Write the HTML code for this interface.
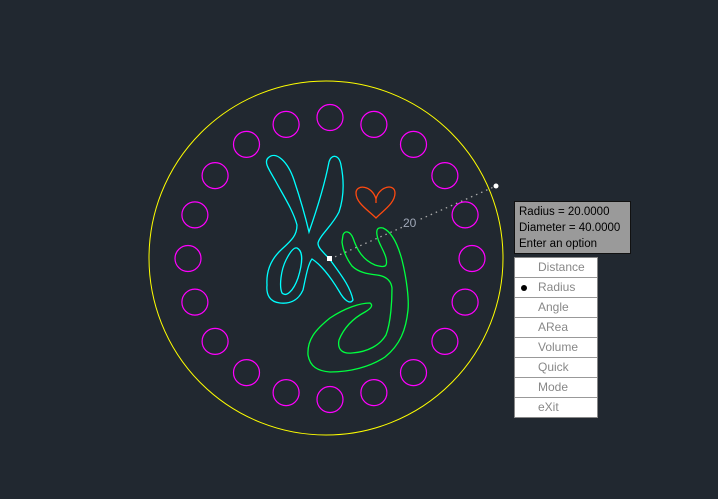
<!DOCTYPE html>
<html><head><meta charset="utf-8"><style>
body{margin:0;width:718px;height:499px;background:#212830;overflow:hidden;font-family:"Liberation Sans",Tahoma,sans-serif;position:relative}
.tip{position:absolute;left:514px;top:201px;background:#9a9a9a;border:1px solid #111;font-size:11.5px;line-height:16px;color:#000;padding:2px 0 0 4px;box-sizing:border-box;width:117px;height:53px}
.menu{position:absolute;left:514px;top:257px;width:84px;background:#fff;border:1px solid #888;box-sizing:border-box}
.menu div{height:19px;border-bottom:1px solid #999;font-size:12px;line-height:19px;color:#888;padding-left:23px;position:relative}
.menu div:last-child{border-bottom:none}
.dot{position:absolute;left:6px;top:7px;width:6px;height:6px;border-radius:50%;background:#000}
</style></head><body>
<svg width="718" height="499" style="position:absolute;left:0;top:0">
<circle cx="326" cy="258" r="177" fill="none" stroke="#ffff00" stroke-width="1"/>
<g fill="none" stroke="#ff00ff" stroke-width="1.2" id="sc"></g>
<path d="M268,158 C276,150 288,162 294,180 C300,198 305,215 309,232 C316,212 324,188 329,162 C331,154 339,154 341,165 C345,185 343,200 339,212 C332,226 320,235 318,243 C318,249 325,253 331,261 C341,275 350,286 353,300 C350,305 344,300 339,291 C330,276 320,264 312,259 C308,264 306,276 303,290 C298,301 290,304 280,303 C270,302 266,295 267,285 C266,270 272,258 282,249 C292,240 297,235 297,225 C293,210 283,195 275,180 C268,168 264,162 268,158 Z" fill="none" stroke="#00ffff" stroke-width="1.3"/>
<path d="M297,248 C303,251 303,262 298,278 C293,292 286,297 282,293 C279,286 281,270 286,260 C290,252 294,247 297,248 Z" fill="none" stroke="#00ffff" stroke-width="1.3"/>
<path d="M343,235 C345,230 350,231 353,238 C357,250 363,260 375,265 C385,268 388,267 386,258 C384,250 378,243 377,235 C376,229 378,227 383,228 C392,232 398,245 402,260 C407,280 409,300 408,310 C406,330 400,345 385,357 C370,367 350,372 330,372 C318,371 310,367 308,355 C307,340 315,330 330,318 C345,308 360,303 370,303 C373,305 372,308 365,312 C350,320 343,330 339,340 C337,350 343,354 352,353 C368,352 380,345 386,335 C391,322 392,300 392,288 C391,280 385,276 377,275 C367,274 358,272 352,266 C346,258 343,250 342,242 Z" fill="none" stroke="#00ff40" stroke-width="1.3"/>
<path d="M376,199 C379,186 395,183 395,193 C395,203 384,210 376,218 C368,210 356,203 356,193 C356,184 372,185 376,199 Z M376,199 L376,203" fill="none" stroke="#ff4a10" stroke-width="1.3"/>
<line x1="330" y1="259" x2="496" y2="186" stroke="#aaaaaa" stroke-width="1.3" stroke-dasharray="1.5,4"/>
<rect x="327" y="256" width="5" height="5" fill="#fff"/>
<circle cx="496" cy="186" r="2.5" fill="#fff"/>
<rect x="402" y="215" width="16" height="13" fill="#212830"/>
<text x="403" y="227" fill="#a0a8b8" font-size="12" font-family="Liberation Sans,sans-serif">20</text>
</svg>
<div class="tip">Radius = 20.0000<br>Diameter = 40.0000<br>Enter an option</div>
<div class="menu"><div>Distance</div><div><span class="dot"></span>Radius</div><div>Angle</div><div>ARea</div><div>Volume</div><div>Quick</div><div>Mode</div><div>eXit</div></div>
<script>
var g=document.getElementById('sc'),s='';
for(var i=0;i<20;i++){var a=i*Math.PI/10;var x=330+142*Math.sin(a),y=258.5-141*Math.cos(a);s+='<circle cx="'+x.toFixed(1)+'" cy="'+y.toFixed(1)+'" r="13"/>';}
g.innerHTML=s;
</script>
</body></html>
